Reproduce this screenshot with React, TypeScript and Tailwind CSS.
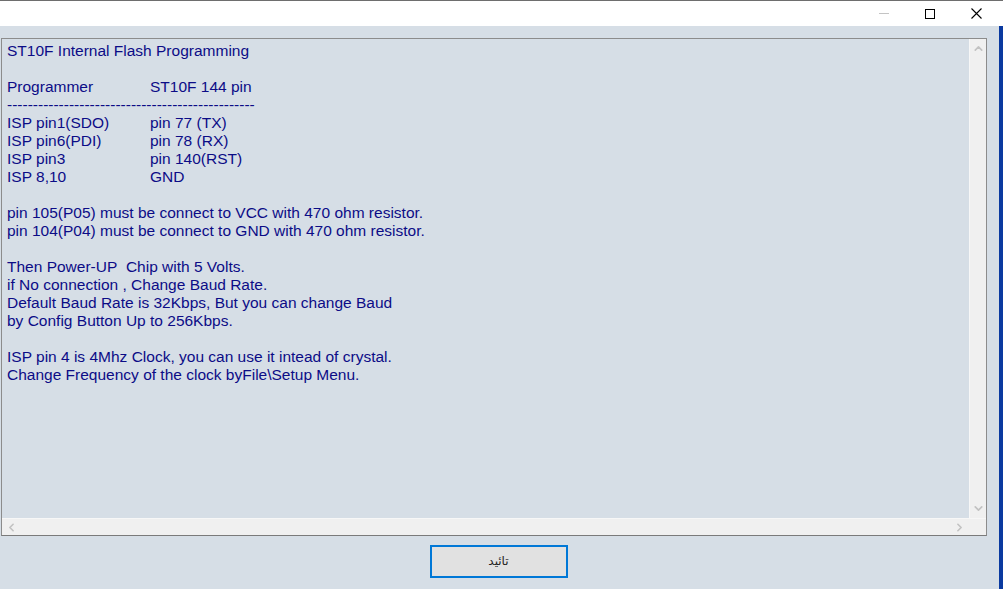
import { ChevronUp, ChevronDown, ChevronLeft, ChevronRight } from 'lucide-react'

const rows: [string, string][] = [
  ['ISP pin1(SDO)', 'pin 77 (TX)'],
  ['ISP pin6(PDI)', 'pin 78 (RX)'],
  ['ISP pin3', 'pin 140(RST)'],
  ['ISP 8,10', 'GND'],
]

const notes = [
  'pin 105(P05) must be connect to VCC with 470 ohm resistor.',
  'pin 104(P04) must be connect to GND with 470 ohm resistor.',
  '',
  'Then Power-UP\u00a0 Chip with 5 Volts.',
  'if No connection , Change Baud Rate.',
  'Default Baud Rate is 32Kbps, But you can change Baud',
  'by Config Button Up to 256Kbps.',
  '',
  'ISP pin 4 is 4Mhz Clock, you can use it intead of crystal.',
  'Change Frequency of the clock byFile\\Setup Menu.',
]

export default function App() {
  return (
    <div className="flex h-[589px] w-[1003px] flex-col overflow-hidden bg-white" style={{ fontFamily: '"Liberation Sans", Arial, sans-serif' }}>
      <div className="h-px w-full bg-[#6e6e6e]" />
      {/* title bar */}
      <div className="flex h-[25px] shrink-0 items-center justify-end bg-white pr-[4px]">
        <div className="flex h-full w-[46px] items-center justify-center">
          <div className="h-px w-[10px] bg-[#c4c4c4]" />
        </div>
        <div className="flex h-full w-[46px] items-center justify-center">
          <div className="h-[10px] w-[10px] border border-black" />
        </div>
        <div className="flex h-full w-[46px] items-center justify-center">
          <svg width="11" height="11" viewBox="0 0 11 11" stroke="black" strokeWidth="1.1">
            <path d="M0.5 0.5 L10.5 10.5 M10.5 0.5 L0.5 10.5" />
          </svg>
        </div>
      </div>

      <div className="flex flex-1">
        <div className="flex flex-1 flex-col bg-[#d6dee6]">
          <div className="h-[12px]" />
          {/* text box */}
          <div className="ml-px flex h-[498px] w-[986px] flex-col border border-[#8c8c8c] border-b-[#7a7a7a]">
            <div className="flex flex-1 overflow-hidden">
              <div className="flex-1 px-[5px] pt-[3px] text-[15.5px] leading-[18px] text-[#0c0c86]">
                <div>ST10F Internal Flash Programming</div>
                <div className="h-[18px]" />
                <div className="flex">
                  <span className="w-[143px]">Programmer</span>
                  <span>ST10F 144 pin</span>
                </div>
                <div className="whitespace-nowrap">------------------------------------------------</div>
                {rows.map(([a, b]) => (
                  <div key={a} className="flex">
                    <span className="w-[143px]">{a}</span>
                    <span>{b}</span>
                  </div>
                ))}
                <div className="h-[18px]" />
                {notes.map((n, i) => (
                  n ? <div key={i} className="whitespace-nowrap">{n}</div> : <div key={i} className="h-[18px]" />
                ))}
              </div>
              <div className="flex w-[17px] flex-col items-center justify-between border-l border-[#f7f7f7] bg-[#f0f0f0] py-[3px]">
                <ChevronUp size={13} strokeWidth={3} className="text-[#c2c2c2]" />
                <ChevronDown size={13} strokeWidth={3} className="text-[#c2c2c2]" />
              </div>
            </div>
            <div className="flex h-[17px] border-t border-[#f7f7f7]">
              <div className="flex flex-1 items-center justify-between bg-[#f0f0f0] px-[3px]">
                <ChevronLeft size={13} strokeWidth={3} className="text-[#c2c2c2]" />
                <ChevronRight size={13} strokeWidth={3} className="text-[#c2c2c2]" />
              </div>
              <div className="w-[17px] bg-[#f0f0f0]" />
            </div>
          </div>
          {/* button row */}
          <div className="flex flex-1 items-start justify-center pt-[9px]">
            <button className="ml-[-2px] flex h-[33px] w-[138px] items-center justify-center border-2 border-[#0078d7] bg-[#e1e1e1] pb-[2px] text-[12px] font-normal text-[#222]" style={{ fontFamily: '"DejaVu Sans", "Noto Sans", sans-serif' }}>
              تائید
            </button>
          </div>
        </div>
        <div className="w-[4px] bg-[#0a3aa0]" />
      </div>
    </div>
  )
}
